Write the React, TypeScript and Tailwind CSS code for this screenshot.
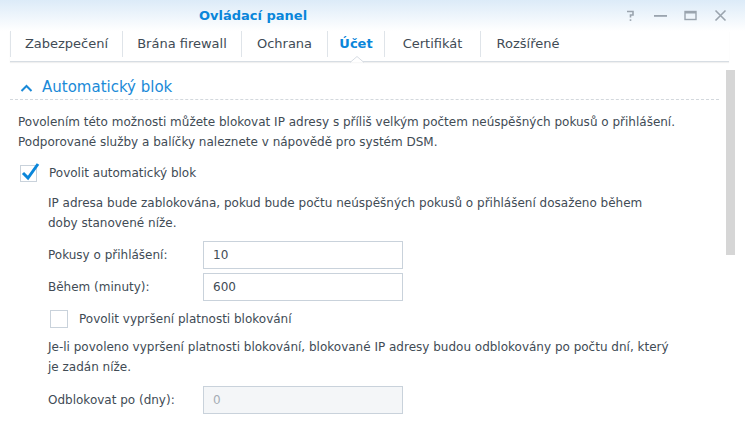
import React from "react"

const tabs = [
  { name: "Zabezpečení", w: "w-[112px]" },
  { name: "Brána firewall", w: "w-[119px]" },
  { name: "Ochrana", w: "w-[86px]" },
  { name: "Účet", w: "w-[57px]" },
  { name: "Certifikát", w: "w-[96px]" },
  { name: "Rozšířené", w: "w-[95px]" },
]

function Field({ label, value, disabled }: { label: string; value: string; disabled?: boolean }) {
  return (
    <div className="flex items-center">
      <span className="w-[155px]">{label}</span>
      <div
        className={
          "flex h-[28px] w-[200px] items-center border px-[9px] " +
          (disabled ? "border-[#c9d2db] bg-[#f4f6f8] text-[#a5adb5]" : "border-[#c9d2db] bg-white")
        }
      >
        {value}
      </div>
    </div>
  )
}

export default function App() {
  return (
    <div
      className="relative h-[432px] w-[745px] overflow-hidden bg-white text-[12px] text-[#414b55]"
      style={{ fontFamily: '"DejaVu Sans", Verdana, sans-serif' }}
    >
      {/* title bar */}
      <div className="flex h-[31px] items-center bg-gradient-to-b from-[#dcebf8] to-white pr-[18px]">
        <div className="flex-1 pl-[199px] text-[13px] font-bold text-[#0a86da]">Ovládací panel</div>
        <div className="flex items-center gap-[17px] text-[#9aa4ae]">
          <svg width="13" height="13" viewBox="0 0 13 13" fill="none" stroke="currentColor" strokeWidth="1.6">
            <path d="M3 2.5h6v3.5H6.5v2.5" />
            <rect x="5.7" y="10.3" width="1.6" height="1.6" fill="currentColor" stroke="none" />
          </svg>
          <svg width="13" height="13" viewBox="0 0 13 13" fill="currentColor">
            <rect x="0" y="6" width="13" height="1.8" />
          </svg>
          <svg width="13" height="13" viewBox="0 0 13 13" fill="none" stroke="currentColor">
            <rect x="1" y="2.5" width="11" height="8" strokeWidth="1.4" />
            <rect x="1" y="2.5" width="11" height="2" fill="currentColor" strokeWidth="0" />
          </svg>
          <svg width="13" height="13" viewBox="0 0 13 13" fill="none" stroke="currentColor" strokeWidth="1.6">
            <path d="M1.5 1.5l10 10M11.5 1.5l-10 10" />
          </svg>
        </div>
      </div>

      {/* tabs */}
      <div className="relative mx-[10px] mr-[16px] flex h-[31px] items-start border-b border-[#d7dde3] shadow-[0_1px_1px_rgba(0,0,0,0.06)]">
        {tabs.map((t) => (
          <div
            key={t.name}
            className={
              "flex h-[26px] items-center justify-center border-l border-[#dfe4e9] text-[13px] last:border-r " +
              t.w +
              (t.name === "Účet" ? " font-bold text-[#0a86da]" : "")
            }
          >
            {t.name}
          </div>
        ))}
        <svg className="absolute left-[340px] top-[25px]" width="14" height="7" viewBox="0 0 14 7">
          <path d="M0 6.5L7 0.5L14 6.5" fill="white" stroke="#d7dde3" />
        </svg>
      </div>

      {/* content */}
      <div className="relative mr-[10px] pl-[10px] pt-[14px]">
        <div className="absolute right-[0px] top-[8px] h-[185px] w-[9px] bg-[#d6d6d6]" />
        <div className="mr-[16px] flex h-[24px] items-center gap-[9px] border-b border-dashed border-[#d3d8dd] pl-[10px] text-[15px] text-[#1a8ad8]">
          <svg width="13" height="10" viewBox="0 0 13 10" fill="none" stroke="#1a8ad8" strokeWidth="2">
            <path d="M1.5 8l5-5 5 5" />
          </svg>
          <span>Automatický blok</span>
        </div>

        <div className="pl-[8px] pr-[20px]">
          <p className="mt-[12px] leading-[20px]">
            Povolením této možnosti můžete blokovat IP adresy s příliš velkým počtem neúspěšných pokusů o přihlášení.
            <br />
            Podporované služby a balíčky naleznete v nápovědě pro systém DSM.
          </p>

          <div className="mt-[12px] flex items-center gap-[12px] pl-[2px]">
            <div className="relative h-[17px] w-[17px] border border-[#c9d2db]">
              <svg className="absolute -left-[1px] -top-[5px]" width="20" height="21" viewBox="0 0 20 21" fill="none" stroke="#0a86da" strokeWidth="3">
                <path d="M3 12l5 5L18 3" />
              </svg>
            </div>
            <span>Povolit automatický blok</span>
          </div>

          <div className="pl-[30px]">
            <p className="mt-[11px] leading-[20px]">
              IP adresa bude zablokována, pokud bude počtu neúspěšných pokusů o přihlášení dosaženo během
              <br />
              doby stanovené níže.
            </p>
            <div className="mt-[8px] flex flex-col gap-[4px]">
              <Field label="Pokusy o přihlášení:" value="10" />
              <Field label="Během (minuty):" value="600" />
            </div>

            <div className="mt-[9px] flex items-center gap-[11px] pl-[2px]">
              <div className="h-[18px] w-[18px] border border-[#c9d2db] bg-white" />
              <span>Povolit vypršení platnosti blokování</span>
            </div>

            <p className="mt-[9px] leading-[20px]">
              Je-li povoleno vypršení platnosti blokování, blokované IP adresy budou odblokovány po počtu dní, který
              <br />
              je zadán níže.
            </p>
            <div className="mt-[9px]">
              <Field label="Odblokovat po (dny):" value="0" disabled />
            </div>
          </div>
        </div>
      </div>
    </div>
  )
}
